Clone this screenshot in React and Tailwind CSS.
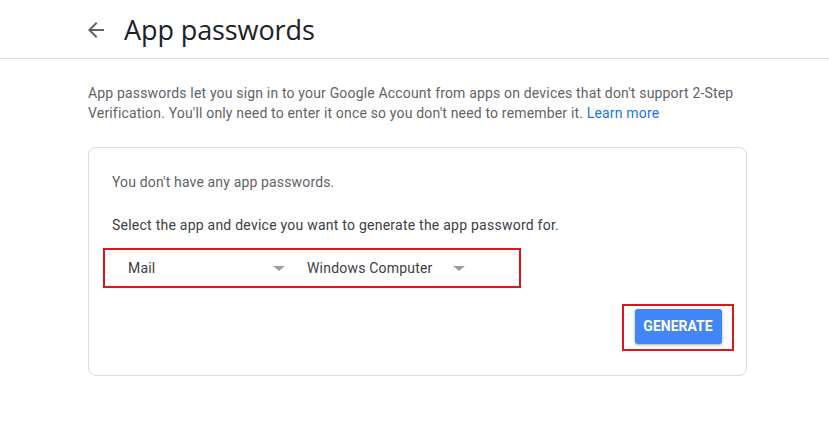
import React from "react";

export default function App() {
  return (
    <div className="w-[829px] h-[427px] bg-white overflow-hidden" style={{ fontFamily: "Roboto, 'Liberation Sans', sans-serif" }}>
      <header className="h-[59px] border-b border-[#dadce0] flex items-center pl-[84px]">
        <svg width="24" height="24" viewBox="0 0 24 24" className="mt-[1px]">
          <path d="M20 11H7.83l5.59-5.59L12 4l-8 8 8 8 1.41-1.41L7.83 13H20v-2z" fill="#5f6368" />
        </svg>
        <h1 className="ml-[16px] text-[27px] leading-none text-[#202124] font-normal tracking-[-0.1px]" style={{ fontFamily: "'Open Sans', Roboto, sans-serif" }}>
          App passwords
        </h1>
      </header>
      <main className="pl-[88px] pt-[24px]">
        <p className="text-[14px] leading-[20px] text-[#5f6368] tracking-[0.17px]">
          App passwords let you sign in to your Google Account from apps on devices that don't support 2-Step
          <br />
          Verification. You'll only need to enter it once so you don't need to remember it.{" "}
          <span className="text-[#1a73e8]">Learn more</span>
        </p>
        <section className="mt-[24px] w-[659px] h-[229px] border border-[#dadce0] rounded-[8px] px-[23px] pt-[24px] flex flex-col">
          <p className="text-[14px] leading-[20px] text-[#5f6368] tracking-[0.15px]">You don't have any app passwords.</p>
          <p className="mt-[23px] text-[14px] leading-[20px] text-[#3c4043] tracking-[0.24px]">
            Select the app and device you want to generate the app password for.
          </p>
          <div className="mt-[13px] ml-[-9px] w-[418px] h-[40px] border-2 border-[#e3131b] flex items-center pl-[23px]">
            <div className="w-[170px] flex items-center">
              <span className="text-[14px] text-[#3c4043] tracking-[0.2px]">Mail</span>
              <span className="ml-auto mr-[13px] w-0 h-0 border-l-[6px] border-r-[6px] border-t-[5px] border-l-transparent border-r-transparent border-t-[#9e9e9e]" />
            </div>
            <div className="ml-[9px] w-[158px] flex items-center">
              <span className="text-[14px] text-[#3c4043] tracking-[0.2px]">Windows Computer</span>
              <span className="ml-auto w-0 h-0 border-l-[6px] border-r-[6px] border-t-[5px] border-l-transparent border-r-transparent border-t-[#9e9e9e]" />
            </div>
          </div>
          <div className="mt-[16px] flex justify-end mr-[-11px]">
            <div className="w-[112px] h-[47px] border-2 border-[#e3131b] flex items-start justify-center pt-[3px]">
              <button className="w-[87px] h-[35px] bg-[#4285f4] rounded-[3px] text-white text-[14px] font-bold shadow-[0_1px_3px_rgba(0,0,0,0.35)]">
                GENERATE
              </button>
            </div>
          </div>
        </section>
      </main>
    </div>
  );
}
